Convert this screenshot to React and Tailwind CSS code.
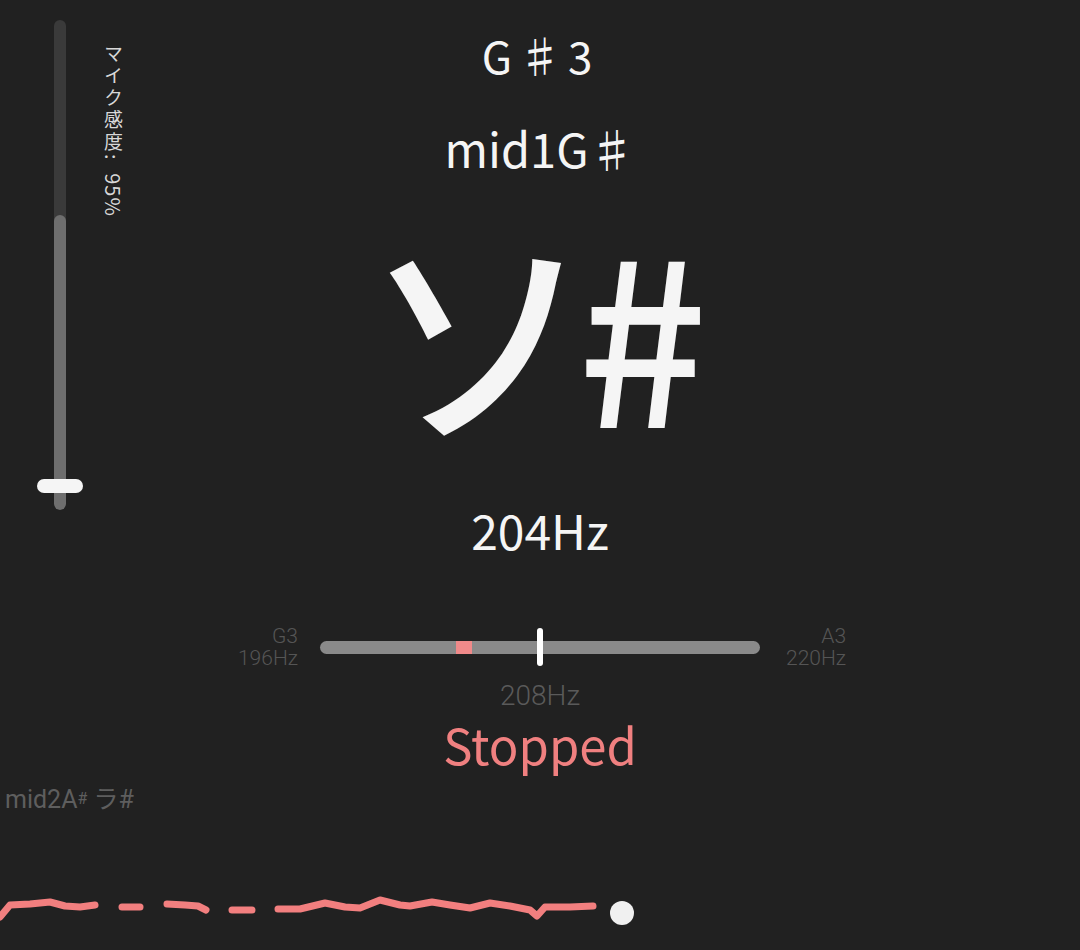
import React from "react";

const CJK = { fontFamily: '"Noto Sans CJK JP", "Noto Sans", sans-serif' };
const ROBO = { fontFamily: 'Roboto, "Noto Sans CJK JP", sans-serif' };

function MicSlider() {
  return (
    <div className="absolute left-[37px] top-[20px] w-[100px] h-[492px]">
      <div className="absolute left-[17px] top-0 w-[12px] h-[490px] rounded-full bg-[#3a3a3a] overflow-hidden">
        <div className="absolute left-0 right-0 bottom-0 h-[295px] rounded-full bg-[#6e6e6e]" />
      </div>
      <div className="absolute left-0 top-[459px] w-[46px] h-[14px] rounded-full bg-[#f5f5f5]" />
      <div
        className="absolute left-[66px] top-[24px] text-[19px] leading-none text-[#d8d8d8]"
        style={{ ...CJK, writingMode: "vertical-rl" }}
      >
        <span className="tracking-[3px]">マイク感度:</span>
        <span className="text-[20px] tracking-[1px]">{"\u00a0\u00a095%"}</span>
      </div>
    </div>
  );
}

function Wave() {
  const pts1 = "0,917 10,905 30,904 50,902 65,906 80,907 95,905";
  const pts2 =
    "278,909 300,909 325,903 345,907 360,908 380,900 400,905 410,906 432,902 450,905 470,908 490,903 510,906 530,910 537,916 545,907 570,907 593,906";
  return (
    <svg width="1080" height="60" viewBox="0 880 1080 60" className="block">
      <g fill="none" stroke="#f27f7f" strokeWidth="7" strokeLinecap="round" strokeLinejoin="round">
        <polyline points={pts1} />
        <line x1="122" y1="907" x2="140" y2="907" />
        <polyline points="167,904 185,905 198,906 206,910" />
        <line x1="232" y1="910" x2="252" y2="910" />
        <polyline points={pts2} />
      </g>
      <circle cx="622" cy="913" r="12" fill="#f0f0f0" />
    </svg>
  );
}

export default function App() {
  return (
    <div className="relative w-[1080px] h-[950px] bg-[#212121] overflow-hidden text-[#f5f5f5]" style={CJK}>
      <MicSlider />
      <div className="flex flex-col items-center">
        <div className="mt-[33px] h-[44px] text-[44px] leading-[44px] tracking-[6px]">G♯3</div>
        <div className="mt-[49px] h-[44px] text-[47px] leading-[44px]">mid1G♯</div>
        <div className="mt-[44px] h-[230px] text-[228px] leading-[230px] font-medium pr-[8px]">
          ソ<span className="-ml-[15px]">#</span>
        </div>
        <div className="mt-[61px] h-[48px] text-[48px] leading-[48px]">204Hz</div>
        <div className="mt-[72px] w-full grid grid-cols-[1fr_440px_1fr] items-center" style={ROBO}>
          <div className="justify-self-end mr-[22px] text-right text-[21px] leading-[22px] text-[#555555] font-light">
            <div>G3</div>
            <div>196Hz</div>
          </div>
          <div className="relative h-[38px] flex items-center">
            <div className="relative w-full h-[13px] rounded-full bg-[#8a8a8a]">
              <div className="absolute left-[136px] top-0 w-[16px] h-[13px] bg-[#f08a8a]" />
            </div>
            <div className="absolute left-[217px] top-0 w-[6px] h-[38px] rounded-full bg-white" />
          </div>
          <div className="justify-self-start ml-[26px] text-right text-[21px] leading-[22px] text-[#555555] font-light">
            <div>A3</div>
            <div>220Hz</div>
          </div>
        </div>
        <div className="mt-[12px] h-[30px] text-[28px] leading-[30px] text-[#5a5a5a] font-light" style={ROBO}>208Hz</div>
        <div className="mt-[5px] h-[56px] text-[49px] leading-[56px] text-[#f08080]">Stopped</div>
      </div>
      <div className="mt-[13px] pl-[5px] text-[25px] leading-[28px] text-[#5e5e5e]" style={ROBO}>
        mid2A<span className="text-[16px] align-[4px]">#</span> ラ#
      </div>
      <div className="mt-[66px]">
        <Wave />
      </div>
    </div>
  );
}
